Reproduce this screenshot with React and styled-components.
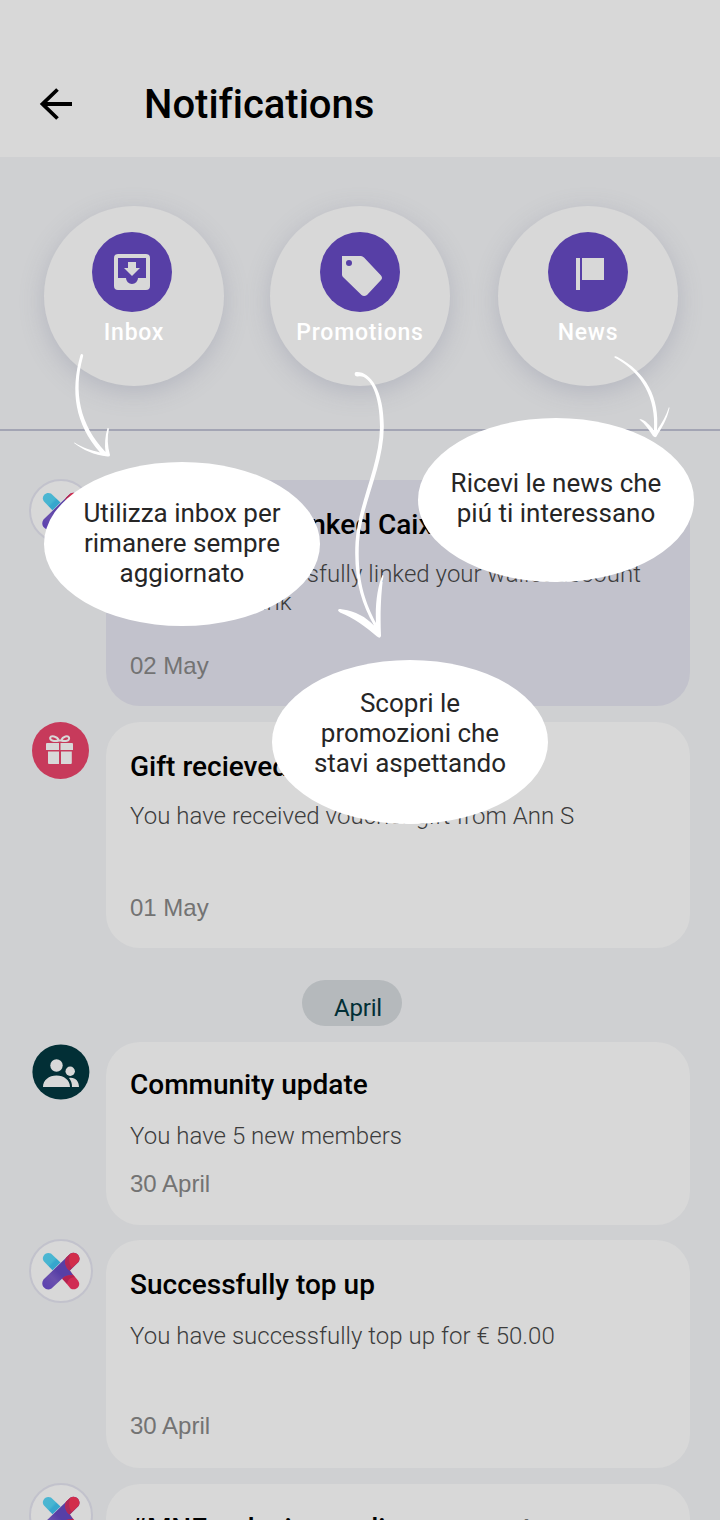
import React from 'react';
import styled, { createGlobalStyle } from 'styled-components';

const GlobalStyle = createGlobalStyle`
  * { box-sizing: border-box; }
  html, body { margin: 0; padding: 0; }
  body { background: #cfd0d2; overflow: hidden; font-family: Roboto, sans-serif; }
  svg { display: block; }
`;

const Screen = styled.div`
  position: relative;
  width: 720px;
  height: 1520px;
  overflow: hidden;
  background: #cfd0d2;
`;

const Header = styled.header`
  display: flex;
  align-items: center;
  height: 157px;
  padding: 52px 36px 0;
  background: #d8d8d8;
`;

const BackButton = styled.button`
  display: flex;
  padding: 0;
  margin: -2px 68px 0 0;
  border: 0;
  background: none;
`;

const Title = styled.h1`
  margin: 0;
  font-size: 40px;
  line-height: 48px;
  font-weight: 500;
  font-variant-ligatures: none;
  color: #000;
`;

const Categories = styled.nav`
  display: flex;
  height: 274px;
  padding: 49px 42px 0 44px;
  border-bottom: 2px solid #a3a5b4;
`;

const Category = styled.div`
  display: flex;
  flex-direction: column;
  align-items: center;
  width: 180px;
  height: 180px;
  margin-right: ${(p) => p.$gap || 0}px;
  padding-top: 26px;
  border-radius: 50%;
  background: #d8d8d8;
  box-shadow: 0 6px 24px rgba(120, 122, 150, 0.3);
`;

const CategoryIcon = styled.div`
  display: flex;
  align-items: center;
  justify-content: center;
  width: 80px;
  height: 80px;
  margin-left: ${(p) => p.$shift || 0}px;
  border-radius: 50%;
  background: #573fa6;
`;

const CategoryLabel = styled.span`
  margin-top: 7px;
  font-size: 23px;
  line-height: 28px;
  font-weight: 500;
  letter-spacing: 0.75px;
  color: #fff;
`;

const Feed = styled.main`
  display: flex;
  flex-direction: column;
  padding: 49px 30px 0 29px;
`;

const Row = styled.section`
  display: flex;
  align-items: flex-start;
  margin-bottom: ${(p) => p.$gap || 16}px;
`;

const AvatarSlot = styled.div`
  flex: none;
  display: flex;
  justify-content: center;
  width: 64px;
  margin-right: 13px;
  margin-top: ${(p) => p.$top || 0}px;
`;

const Card = styled.article`
  flex: 1;
  display: flex;
  flex-direction: column;
  height: ${(p) => p.$height}px;
  padding: ${(p) => p.$top || 27}px 24px ${(p) => p.$bottom || 26}px;
  border-radius: 34px;
  background: ${(p) => (p.$unread ? '#c2c2cc' : '#d8d8d8')};
`;

const CardTitle = styled.h2`
  margin: 0 0 ${(p) => p.$gap || 17}px;
  font-size: 28px;
  line-height: 36px;
  font-weight: 500;
  white-space: nowrap;
  color: #000;
`;

const CardBody = styled.p`
  margin: 0;
  font-size: 24px;
  line-height: 28px;
  font-weight: 300;
  letter-spacing: 0.03px;
  color: #3c3c3c;
`;

const CardDate = styled.time`
  margin-top: auto;
  font-family: 'Liberation Sans', sans-serif;
  font-size: 24px;
  line-height: 28px;
  color: #737373;
`;

const MonthPill = styled.div`
  align-self: flex-start;
  width: 100px;
  height: 46px;
  margin: 16px 0 16px 273px;
  padding: 14px 0 0 32px;
  border-radius: 23px;
  background: #b5b9bc;
  font-size: 24px;
  line-height: 28px;
  letter-spacing: -0.2px;
  color: #022f36;
`;

const Bubble = styled.div`
  position: absolute;
  left: ${(p) => p.$x}px;
  top: ${(p) => p.$y}px;
  display: flex;
  justify-content: center;
  width: 276px;
  height: 164px;
  padding-top: ${(p) => p.$pad}px;
  border-radius: 50%;
  background: #fff;
  font-size: 26px;
  line-height: 30px;
  text-align: center;
  white-space: pre-line;
  color: #262626;
`;

const Arrows = styled.svg`
  position: absolute;
  left: 0;
  top: 340px;
  pointer-events: none;
`;

const BrandMark = ({ id }) => (
  <svg width="64" height="64" viewBox="0 0 64 64">
    <defs>
      <linearGradient id={`violet-${id}`} x1="0" y1="1" x2="1" y2="0">
        <stop offset="0" stopColor="#5a3fb0" />
        <stop offset="0.3" stopColor="#6a50ad" />
        <stop offset="0.45" stopColor="#573fa6" />
        <stop offset="1" stopColor="#573fa6" />
      </linearGradient>
      <linearGradient id={`blue-${id}`} x1="0" y1="0" x2="1" y2="1">
        <stop offset="0" stopColor="#4fb6d2" />
        <stop offset="0.5" stopColor="#46b5d1" />
        <stop offset="0.6" stopColor="#36a6cd" />
        <stop offset="1" stopColor="#36a6cd" />
      </linearGradient>
    </defs>
    <circle cx="32" cy="32" r="31" fill="#d8d8d8" stroke="#c2c2cc" strokeWidth="2" />
    <path d="M15 22.5C11.500 18 16.500 12 22 14.500L31.500 23.500L23.500 31.300Z" fill={`url(#blue-${id})`} />
    <path d="M33 39L41 32L49 41.500C53 47 46.500 52.500 41.500 49.500Z" fill="#d02b54" />
    <path d="M14.500 40.500L41.500 14.500C47 11.500 53 18 49.500 23L41 31.500L44 36.200C38 36 36 37 33 39.800L22.500 49.500C17 53 10.500 46.500 14.500 40.500Z" fill={`url(#violet-${id})`} />
    <path d="M37 18.800L41.500 14.500C47 11.500 53 18 49.500 23L40.500 31.500C37 29 35 24 37 18.800Z" fill="#d22d4b" />
    <path d="M37 18.800L41 15C39.500 20 40 26 43 29L40.500 31.500C37 29 35 24 37 18.800Z" fill="#b02857" />
    <path d="M33 39.800C36 37 38 36 44 36.200L46 38.300C42 38.300 39.500 39.500 38 44.800Z" fill="#b3224f" />
  </svg>
);

const GiftMark = () => (
  <svg width="58" height="58" viewBox="0 0 58 58">
    <circle cx="28.500" cy="28.500" r="28.500" fill="#c73a5b" />
    <g fill="#d8d8d8">
      <path d="M15 21h12v7H14v-6q0-1 1-1zM28.500 21h11.500q1 0 1 1v6H28.500zM16 29.500h11v12.500H17q-1 0-1-1zM29 29.500h10.800v11.500q0 1-1 1H29z" />
    </g>
    <g fill="none" stroke="#d8d8d8" strokeWidth="2">
      <path d="M27 18.500C25 14 19 13.500 18.200 15.500C17.500 19 23 19.500 27 18.500zM29 18.500C31 14 36 13.500 37 15.500C38 19 33 19.500 29 18.500z" />
    </g>
  </svg>
);

const PeopleMark = () => (
  <svg width="58" height="56" viewBox="0 0 58 56">
    <ellipse cx="28.900" cy="28" rx="28.500" ry="27.600" fill="#022f36" />
    <g fill="#d8d8d8">
      <circle cx="24.500" cy="21.500" r="6.200" />
      <circle cx="38.200" cy="27.200" r="4.700" />
      <path d="M11 43C11 36 17 31.500 24.500 31.500S38 36 38 43zM40 43C40 39 39 36.500 37 34C43 33 47 37 47 43z" />
    </g>
  </svg>
);

const InboxIcon = () => (
  <svg width="36" height="36" viewBox="0 0 36 36" fill="#d8d8d8">
    <path fillRule="evenodd" d="M4 0H32Q36 0 36 4V32Q36 36 32 36H4Q0 36 0 32V4Q0 0 4 0ZM4 4V24H12A6 6 0 0 0 24 24H32V4Z" />
    <path d="M14 8h8v6h4l-8 8l-8-8h4z" />
  </svg>
);

const TagIcon = () => (
  <svg width="40" height="40" viewBox="0 0 40 40" fill="#d8d8d8">
    <path fillRule="evenodd" d="M0 0H19Q20.500 0 22 1.500L39 19.500Q41 22 39 24L25 39Q22 41 19.500 39L1 21Q0 20 0 18.500ZM7 4A3 3 0 1 0 7 10A3 3 0 1 0 7 4Z" />
  </svg>
);

const FlagIcon = () => (
  <svg width="28" height="32" viewBox="0 0 28 32" fill="#d8d8d8">
    <path d="M0 0h4v32H0zM6 0h22v22H6z" />
  </svg>
);

const IconBox = styled.div`
  transform: translate(${(p) => p.$x || 0}px, ${(p) => p.$y || 0}px);
`;

export default function App() {
  return (
    <Screen>
      <GlobalStyle />
      <Header>
        <BackButton aria-label="Back">
          <svg width="40" height="40" viewBox="0 0 40 40" fill="none" stroke="#000" strokeWidth="3.800">
            <path d="M36 20H6M21.500 5.500L6.500 20L21.500 34.500" />
          </svg>
        </BackButton>
        <Title>Notifications</Title>
      </Header>

      <Categories>
        <Category $gap={46}>
          <CategoryIcon $shift={-4}><InboxIcon /></CategoryIcon>
          <CategoryLabel>Inbox</CategoryLabel>
        </Category>
        <Category $gap={48}>
          <CategoryIcon><IconBox $x={2} $y={4}><TagIcon /></IconBox></CategoryIcon>
          <CategoryLabel>Promotions</CategoryLabel>
        </Category>
        <Category>
          <CategoryIcon><IconBox $x={2} $y={2}><FlagIcon /></IconBox></CategoryIcon>
          <CategoryLabel>News</CategoryLabel>
        </Category>
      </Categories>

      <Feed>
        <Row>
          <AvatarSlot $top={-1}><BrandMark id="linked" /></AvatarSlot>
          <Card $height={226} $unread>
            <CardTitle>Successfully linked CaixaBank</CardTitle>
            <CardBody>You have successfully linked your wallet account with CaixaBank</CardBody>
            <CardDate>02 May</CardDate>
          </Card>
        </Row>
        <Row>
          <AvatarSlot><GiftMark /></AvatarSlot>
          <Card $height={226}>
            <CardTitle>Gift recieved</CardTitle>
            <CardBody>You have received voucher gift from Ann S</CardBody>
            <CardDate>01 May</CardDate>
          </Card>
        </Row>
        <MonthPill>April</MonthPill>
        <Row $gap={15}>
          <AvatarSlot $top={2}><PeopleMark /></AvatarSlot>
          <Card $height={183} $top={25} $bottom={27}>
            <CardTitle $gap={19}>Community update</CardTitle>
            <CardBody>You have 5 new members</CardBody>
            <CardDate>30 April</CardDate>
          </Card>
        </Row>
        <Row>
          <AvatarSlot $top={-1}><BrandMark id="topup" /></AvatarSlot>
          <Card $height={228} $bottom={28}>
            <CardTitle $gap={19}>Successfully top up</CardTitle>
            <CardBody>You have successfully top up for € 50.00</CardBody>
            <CardDate>30 April</CardDate>
          </Card>
        </Row>
        <Row>
          <AvatarSlot $top={-1}><BrandMark id="event" /></AvatarSlot>
          <Card $height={226}>
            <CardTitle>#MNE reducing on-line payment</CardTitle>
          </Card>
        </Row>
      </Feed>

      <Bubble $x={44} $y={462} $pad={36}>{'Utilizza inbox per\nrimanere sempre\naggiornato'}</Bubble>
      <Bubble $x={418} $y={418} $pad={50}>{'Ricevi le news che\npiú ti interessano'}</Bubble>
      <Bubble $x={272} $y={660} $pad={28}>{'Scopri le\npromozioni che\nstavi aspettando'}</Bubble>

      <Arrows width="720" height="310" viewBox="0 340 720 310" fill="#fff">
        <path d="M80.500 355C81 353 84 354 83 356.500C73 392 80 425 105.500 452C104.500 445 105 436 107.500 428L109 428.500C107 437 107.500 446 110 455Q110 457 107.500 456.500C94 455 83 450 74 443L74.500 442.500C83 448 91 450 100 452.500C75 424 70 391 80.500 355Z" />
        <path d="M356 372C370 371 384 390 383.800 427C383.500 467 361.500 505 359 542C357 580 365 602 376 623C375 605 377.500 586 382.500 575L383.500 575.500C381 592 380 614 381 636Q380 639 377 636.500C366 627 354 618 340 612.500C336 610 339 608 343 609.500C355 611 366 617 374 625.500C361 603 353.500 577 355.500 542C358 503 379.500 466 380 427C380 393 369 374 358 376.500C354 377 354 372.500 356 372Z" />
        <path d="M614.500 357.500C614 356 616 356 617.500 357C646 372 660 398 657 430C662 423 666 416 669 407L669.500 408C667 420 661 429 656.500 436.500Q655 438 653 436C649 430 645 424 640 420L639.500 419C646 420 650 426 654 430C656 399 643 373 614.500 357.500Z" />
      </Arrows>
    </Screen>
  );
}
